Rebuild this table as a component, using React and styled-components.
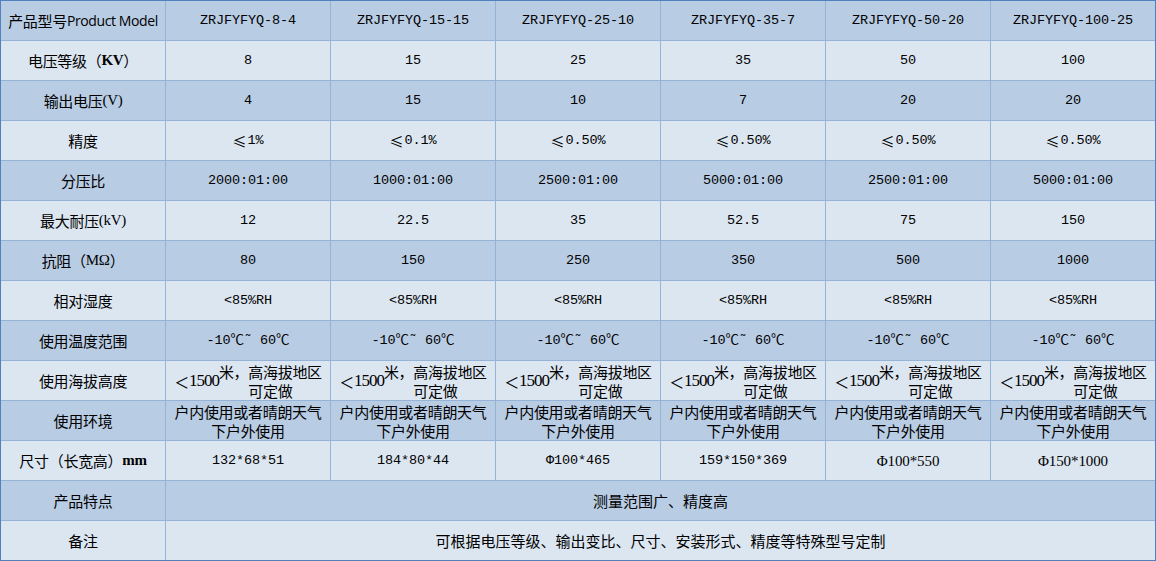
import React from 'react'
import styled, { createGlobalStyle } from 'styled-components';

const GlobalStyle = createGlobalStyle`
  html, body {
    margin: 0;
    padding: 0;
    background: #ffffff;
  }
  body {
    font-family: "Noto Sans CJK SC", "Noto Sans", sans-serif;
    color: #000;
  }
`;

const Table = styled.div`
  display: grid;
  grid-template-columns: repeat(7, 164px);
  grid-auto-rows: 39px;
  gap: 1px;
  width: max-content;
  background: #95b3d7;
  border: 1px solid #4f81bd;
`;

const CellBase = styled.div`
  display: flex;
  align-items: center;
  justify-content: center;
  text-align: center;
  background: ${(p) => (p.$dark ? '#b8cce4' : '#dce6f1')};
  overflow: hidden;
  white-space: nowrap;
`;

const LabelCell = styled(CellBase)`
  font-size: 15px;
  letter-spacing: -0.3px;
`;

const Cell = styled(CellBase)`
  font-family: ${(p) =>
    p.$kind === 'mono'
      ? '"Liberation Mono", "Noto Sans CJK SC", monospace'
      : '"Noto Sans CJK SC", sans-serif'};
  font-size: ${(p) => (p.$kind === 'mono' ? '13.5px' : '15px')};
  line-height: ${(p) => (p.$kind === 'mono' ? '18px' : '19px')};
  letter-spacing: ${(p) => (p.$kind === 'mono' ? '-0.1px' : '-0.3px')};
  padding-top: ${(p) => (p.$kind === 'cjk' ? '1px' : '0')};
`;

const WideCell = styled(CellBase)`
  grid-column: span 6;
  font-size: 15px;
`;

const Serif = styled.span`
  font-family: "Liberation Serif", serif;
  font-size: 15px;
`;

const SerifB = styled(Serif)`
  font-weight: bold;
`;

const InlineSerif = styled(Serif)`
  display: inline-block;
  font-size: 17px;
  letter-spacing: -1px;
  transform: translateY(-1px);
`;

const Cjk = styled.span`
  font-family: "Noto Sans CJK SC", sans-serif;
  font-size: 14px;
  margin-right: 1px;
`;

const Sans = styled.span`
  font-family: "Open Sans", "Noto Sans", sans-serif;
  font-size: 14px;
  letter-spacing: -0.4px;
`;

const models = [
  'ZRJFYFYQ-8-4',
  'ZRJFYFYQ-15-15',
  'ZRJFYFYQ-25-10',
  'ZRJFYFYQ-35-7',
  'ZRJFYFYQ-50-20',
  'ZRJFYFYQ-100-25',
];

const altitude = (
  <>
    ＜<InlineSerif>1500</InlineSerif>米，高海拔地区<br />可定做
  </>
);
const env = <>户内使用或者晴朗天气<br />下户外使用</>;
const le = (v) => <><Cjk>≤</Cjk>{v}</>;

// kind: mono = 数字等宽, cjk = 中文多行
const rows = [
  { label: <>电压等级（<SerifB>KV</SerifB>）</>, kind: 'mono', values: ['8', '15', '25', '35', '50', '100'] },
  { label: <>输出电压<Serif>(V)</Serif></>, kind: 'mono', values: ['4', '15', '10', '7', '20', '20'] },
  { label: '精度', kind: 'mono', values: [le('1%'), le('0.1%'), le('0.50%'), le('0.50%'), le('0.50%'), le('0.50%')] },
  { label: '分压比', kind: 'mono', values: ['2000:01:00', '1000:01:00', '2500:01:00', '5000:01:00', '2500:01:00', '5000:01:00'] },
  { label: <>最大耐压<Serif>(kV)</Serif></>, kind: 'mono', values: ['12', '22.5', '35', '52.5', '75', '150'] },
  { label: <>抗阻（<Serif>MΩ</Serif>）</>, kind: 'mono', values: ['80', '150', '250', '350', '500', '1000'] },
  { label: '相对湿度', kind: 'mono', values: Array(6).fill('<85%RH') },
  { label: '使用温度范围', kind: 'mono', values: Array(6).fill('-10℃˜ 60℃') },
  { label: '使用海拔高度', kind: 'cjk', values: Array(6).fill(altitude) },
  { label: '使用环境', kind: 'cjk', values: Array(6).fill(env) },
  {
    label: <>尺寸（长宽高）<SerifB>mm</SerifB></>,
    kind: 'mono',
    values: [
      '132*68*51',
      '184*80*44',
      'Φ100*465',
      '159*150*369',
      <Serif key="a">Φ100*550</Serif>,
      <Serif key="b">Φ150*1000</Serif>,
    ],
  },
];

function App() {
  return (
    <>
      <GlobalStyle />
      <Table>
        <LabelCell $dark>产品型号<Sans>Product Model</Sans></LabelCell>
        {models.map((m) => (
          <Cell key={m} $dark $kind="mono">{m}</Cell>
        ))}

        {rows.map((row, i) => {
          const dark = i % 2 === 1;
          return (
            <React.Fragment key={i}>
              <LabelCell $dark={dark}>{row.label}</LabelCell>
              {row.values.map((v, j) => (
                <Cell key={j} $dark={dark} $kind={row.kind}>{v}</Cell>
              ))}
            </React.Fragment>
          );
        })}

        <LabelCell $dark>产品特点</LabelCell>
        <WideCell $dark>测量范围广、精度高</WideCell>

        <LabelCell>备注</LabelCell>
        <WideCell>可根据电压等级、输出变比、尺寸、安装形式、精度等特殊型号定制</WideCell>
      </Table>
    </>
  )
}

export default App
